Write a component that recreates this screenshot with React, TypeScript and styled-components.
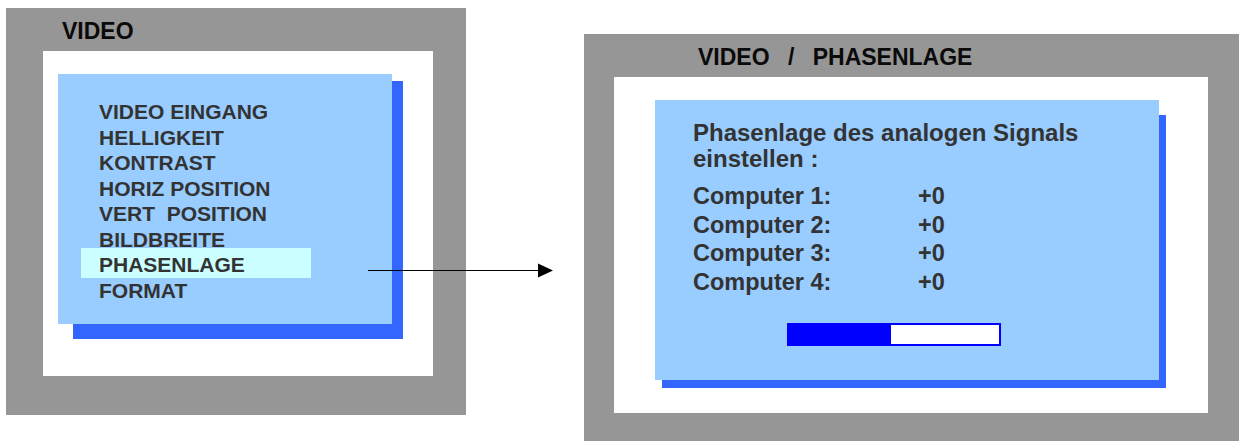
import React from "react";
import styled, { createGlobalStyle } from "styled-components";

const menuItems = [
  "VIDEO EINGANG",
  "HELLIGKEIT",
  "KONTRAST",
  "HORIZ POSITION",
  "VERT  POSITION",
  "BILDBREITE",
  "PHASENLAGE",
  "FORMAT",
];

const computers = [
  { label: "Computer 1:", value: "+0" },
  { label: "Computer 2:", value: "+0" },
  { label: "Computer 3:", value: "+0" },
  { label: "Computer 4:", value: "+0" },
];

const phase = 0.486;

type Shadow = { top: number; left: number; right: number; bottom: number };

const App: React.FC = () => {
  return (
    <>
      <GlobalStyle />
      <Page>
        <Screen $w={460} $mt={8} $ml={6} $pad="0 33px 39px 37px">
          <Title $indent={19}>VIDEO</Title>
          <Monitor $padLeft={15}>
            <Panel
              $w={334}
              $h={250}
              $shadow={{ top: 7, left: 15, right: -11, bottom: -15 }}
            >
              <Menu>
                {menuItems.map((item) => (
                  <MenuItem key={item} $active={item === "PHASENLAGE"}>
                    {item}
                  </MenuItem>
                ))}
              </Menu>
            </Panel>
          </Monitor>
        </Screen>

        <Screen $w={655} $mt={34} $ml={118} $pad="0 31px 28px 30px">
          <Title $indent={84} $wordSpacing={2.8}>
            {"VIDEO  /  PHASENLAGE"}
          </Title>
          <Monitor $padLeft={41}>
            <Panel
              $w={504}
              $h={280}
              $shadow={{ top: 15, left: 7, right: -7, bottom: -8 }}
            >
              <Detail>
                <Intro>
                  Phasenlage des analogen Signals
                  <br />
                  einstellen :
                </Intro>
                <Rows>
                  {computers.map((c) => (
                    <React.Fragment key={c.label}>
                      <span>{c.label}</span>
                      <span>{c.value}</span>
                    </React.Fragment>
                  ))}
                </Rows>
                <Bar>
                  <Fill style={{ width: `${phase * 100}%` }} />
                </Bar>
              </Detail>
            </Panel>
          </Monitor>
        </Screen>

        <Arrow width="186" height="15" viewBox="0 0 186 15">
          <line x1="0" y1="7.5" x2="172" y2="7.5" stroke="#000" strokeWidth="1.2" />
          <polygon points="170,0.5 185,7.5 170,14.5" fill="#000" />
        </Arrow>
      </Page>
    </>
  );
};

export default App;

// Styled Components

const GlobalStyle = createGlobalStyle`
  html, body {
    margin: 0;
    padding: 0;
    background: #fff;
  }
  * {
    box-sizing: border-box;
  }
`;

const Page = styled.div`
  position: relative;
  display: flex;
  align-items: flex-start;
  width: 1239px;
  height: 441px;
  overflow: hidden;
  background: #fff;
  font-family: "Liberation Sans", Arial, sans-serif;
  font-weight: bold;
`;

const Screen = styled.div<{ $w: number; $mt: number; $ml: number; $pad: string }>`
  display: flex;
  flex-direction: column;
  flex-shrink: 0;
  width: ${(p) => p.$w}px;
  height: 407px;
  margin: ${(p) => p.$mt}px 0 0 ${(p) => p.$ml}px;
  padding: ${(p) => p.$pad};
  background: #969696;
`;

const Title = styled.div<{ $indent: number; $wordSpacing?: number }>`
  height: 43px;
  padding: 12px 0 0 ${(p) => p.$indent}px;
  font-size: 23px;
  line-height: 23px;
  color: #0a0a0a;
  white-space: pre;
  word-spacing: ${(p) => p.$wordSpacing ?? 0}px;
`;

const Monitor = styled.div<{ $padLeft: number }>`
  flex: 1;
  isolation: isolate;
  padding: 23px 0 0 ${(p) => p.$padLeft}px;
  background: #fff;
`;

const Panel = styled.div<{ $w: number; $h: number; $shadow: Shadow }>`
  position: relative;
  width: ${(p) => p.$w}px;
  height: ${(p) => p.$h}px;
  background: #99ccff;

  &::before {
    content: "";
    position: absolute;
    top: ${(p) => p.$shadow.top}px;
    left: ${(p) => p.$shadow.left}px;
    right: ${(p) => p.$shadow.right}px;
    bottom: ${(p) => p.$shadow.bottom}px;
    background: #3366ff;
    z-index: -1;
  }
`;

const Menu = styled.div`
  display: flex;
  flex-direction: column;
  align-items: flex-start;
  padding: 25px 0 0 41px;
`;

const MenuItem = styled.div<{ $active?: boolean }>`
  font-size: 21px;
  line-height: 25.57px;
  color: #333;
  white-space: pre;
  ${(p) =>
    p.$active &&
    `
    width: 230px;
    margin: -4px 0 0 -18px;
    padding: 4px 0 0 18px;
    background: #ccffff;
  `}
`;

const Detail = styled.div`
  display: flex;
  flex-direction: column;
  align-items: flex-start;
  padding: 20px 0 0 38px;
  color: #333;
`;

const Intro = styled.div`
  font-size: 24px;
  line-height: 26px;
`;

const Rows = styled.div`
  display: grid;
  grid-template-columns: 225px auto;
  margin-top: 10px;
  font-size: 23.5px;
  line-height: 28.5px;
`;

const Bar = styled.div`
  width: 214px;
  height: 23px;
  margin: 27px 0 0 94px;
  border: 2px solid #0000ff;
  background: #fff;
`;

const Fill = styled.div`
  height: 100%;
  background: #0000ff;
`;

const Arrow = styled.svg`
  position: absolute;
  left: 368px;
  top: 263px;
  display: block;
`;
